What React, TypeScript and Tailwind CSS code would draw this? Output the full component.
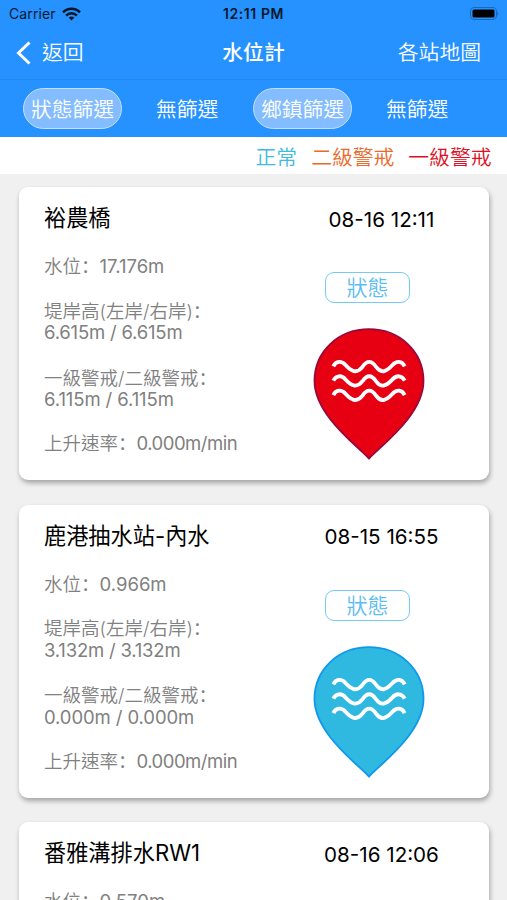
import React from 'react';

type Level = 'normal' | 'first';

interface Station {
  name: string;
  time: string;
  water: string;
  bank?: string;
  alert?: string;
  rate?: string;
  level?: Level;
}

const stations: Station[] = [
  {
    name: '裕農橋',
    time: '08-16 12:11',
    water: '17.176m',
    bank: '6.615m / 6.615m',
    alert: '6.115m / 6.115m',
    rate: '0.000m/min',
    level: 'first',
  },
  {
    name: '鹿港抽水站-內水',
    time: '08-15 16:55',
    water: '0.966m',
    bank: '3.132m / 3.132m',
    alert: '0.000m / 0.000m',
    rate: '0.000m/min',
    level: 'normal',
  },
  {
    name: '番雅溝排水RW1',
    time: '08-16 12:06',
    water: '0.570m',
  },
];

const pinColors = {
  normal: { fill: '#2fb9e0', stroke: '#0f98ec' },
  first: { fill: '#e60012', stroke: '#99083a' },
};

const Pin: React.FC<{ level: Level }> = ({ level }) => (
  <svg width="112" height="132" viewBox="0 0 112 132" fill="none">
    <path
      d="M56 130.5C42 116 1.5 86 1.5 53C1.5 23 26 1.2 56 1.2S110.5 23 110.5 53C110.5 86 70 116 56 130.5Z"
      fill={pinColors[level].fill}
      stroke={pinColors[level].stroke}
      strokeWidth="1.8"
    />
    {[0, 14.4, 28.8].map((dy) => (
      <path
        key={dy}
        transform={`translate(0 ${dy})`}
        d="M20.3 38.3C23 32.8 28.5 32.5 32.5 37C38 43 43.5 46.5 49.5 38.8C54 32.2 58.5 32.2 63 38.8C68.5 46.5 74 43 79.5 37C83.5 32.5 89 32.8 91.7 38.3"
        stroke="#fff"
        strokeWidth="3.8"
      />
    ))}
  </svg>
);

// full-width colon that sits on the left side of its box
const Colon: React.FC = () => <span className="font-['Noto_Sans_CJK_SC'] leading-none">：</span>;

const StationCard: React.FC<{ station: Station }> = ({ station }) => (
  <div className="flex h-[293px] shrink-0 rounded-[9px] bg-white pl-[25px] shadow-[1px_3px_5px_rgba(0,0,0,0.32)]">
    <div className="w-[263px] pt-[15px] text-[18.5px] leading-[21.5px] text-[#808080]">
      <h2 className="text-[22.2px] leading-[32px] font-normal whitespace-nowrap text-black">{station.name}</h2>
      <p className="mt-[22px]">
        水位<Colon /><span className="font-normal">{station.water}</span>
      </p>
      {station.bank && (
        <p className="mt-[23px]">
          堤岸高(左岸/右岸)<Colon />
          <br />
          <span className="font-normal tracking-[-0.2px]">{station.bank}</span>
        </p>
      )}
      {station.alert && (
        <p className="mt-[24px]">
          一級警戒/二級警戒<Colon />
          <br />
          <span className="font-normal tracking-[-0.1px]">{station.alert}</span>
        </p>
      )}
      {station.rate && (
        <p className="mt-[22.5px]">
          上升速率<Colon /><span className="font-normal tracking-[-0.5px]">{station.rate}</span>
        </p>
      )}
    </div>
    <div className="flex w-[149px] flex-col items-center pt-[16.5px]">
      <span className="text-[20.6px] leading-[32px] font-normal whitespace-nowrap text-black">{station.time}</span>
      {station.level && (
        <div className="-ml-[28px] flex flex-col items-center">
          <button className="mt-[36.5px] h-[31px] w-[85px] rounded-[9px] border border-[#75c9f7] pt-[1px] text-[21px] leading-[28px] text-[#5bbcf2]">
            狀態
          </button>
          <div className="mt-[25px] ml-[2px]">
            <Pin level={station.level} />
          </div>
        </div>
      )}
    </div>
  </div>
);

const App: React.FC = () => (
  <div className="flex h-[900px] w-[507px] flex-col overflow-hidden bg-[#f0f0f0] font-['Inter','Noto_Sans_CJK_TC',sans-serif] font-[350]">
    <header className="bg-[#2592ff] text-white">
      <div className="grid h-[27px] grid-cols-3 items-center px-[9px] text-[14px] text-[#06182c]">
        <div className="flex items-center gap-[6px]">
          <span className="font-normal tracking-[0.1px]">Carrier</span>
          <svg width="19" height="14" viewBox="0 0 19 14" fill="none" stroke="#071626" strokeWidth="2.5">
            <path d="M1 5.3C5.8 0.4 13.2 0.4 18 5.3" />
            <path d="M4.1 8.6C7.2 5.5 11.8 5.5 14.9 8.6" />
            <path d="M6.7 10.7C8.3 9.2 10.7 9.2 12.3 10.7L9.5 13.5Z" fill="#071626" stroke="none" />
          </svg>
        </div>
        <span className="text-center font-semibold tracking-[0.6px]">12:11 PM</span>
        <div className="flex justify-end">
          <svg width="30" height="13" viewBox="0 0 30 13" fill="none">
            <rect x="2.5" y="0.5" width="26" height="12" rx="3.5" stroke="#1b69b6" />
            <rect x="4.5" y="2.5" width="22" height="8" rx="1.5" fill="#000" />
            <path d="M29 4.5C30.3 5.2 30.3 7.8 29 8.5Z" fill="#1b69b6" />
          </svg>
        </div>
      </div>
      <nav className="grid h-[53px] grid-cols-3 items-center border-b border-[#2187ea] pr-[26px] pl-[16px] text-[20.8px]">
        <div className="flex items-center gap-[11px]">
          <svg width="15" height="24" viewBox="0 0 15 24" fill="none" stroke="#fff" strokeWidth="3">
            <path d="M13.5 1.5L2.5 12L13.5 22.5" />
          </svg>
          <span>返回</span>
        </div>
        <span className="pl-[10px] text-center font-medium">水位計</span>
        <span className="text-right">各站地圖</span>
      </nav>
      <div className="flex h-[57px] items-center pl-[23px] text-[20.8px]">
        <button className="h-[41px] w-[99px] rounded-full border-[1.5px] border-[#c4e0ff] bg-[#83bcff] pt-[3px] leading-none whitespace-nowrap">狀態篩選</button>
        <span className="ml-[34px] w-[63px] pt-[2px] whitespace-nowrap">無篩選</span>
        <button className="ml-[34px] h-[41px] w-[99px] rounded-full border-[1.5px] border-[#c4e0ff] bg-[#83bcff] pt-[3px] leading-none whitespace-nowrap">鄉鎮篩選</button>
        <span className="ml-[34px] w-[63px] pt-[2px] whitespace-nowrap">無篩選</span>
      </div>
    </header>
    <div className="flex h-[37px] shrink-0 items-center justify-end gap-[14px] bg-white pt-[4px] pr-[15.5px] text-[20.8px]">
      <span className="text-[#3fbbdc]">正常</span>
      <span className="text-[#ea6a2c]">二級警戒</span>
      <span className="text-[#de1126]">一級警戒</span>
    </div>
    <main className="flex min-h-0 flex-1 flex-col gap-[24.5px] overflow-hidden pt-[13px] pr-[18px] pl-[19px]">
      {stations.map((s) => (
        <StationCard key={s.name} station={s} />
      ))}
    </main>
  </div>
);

export default App;
